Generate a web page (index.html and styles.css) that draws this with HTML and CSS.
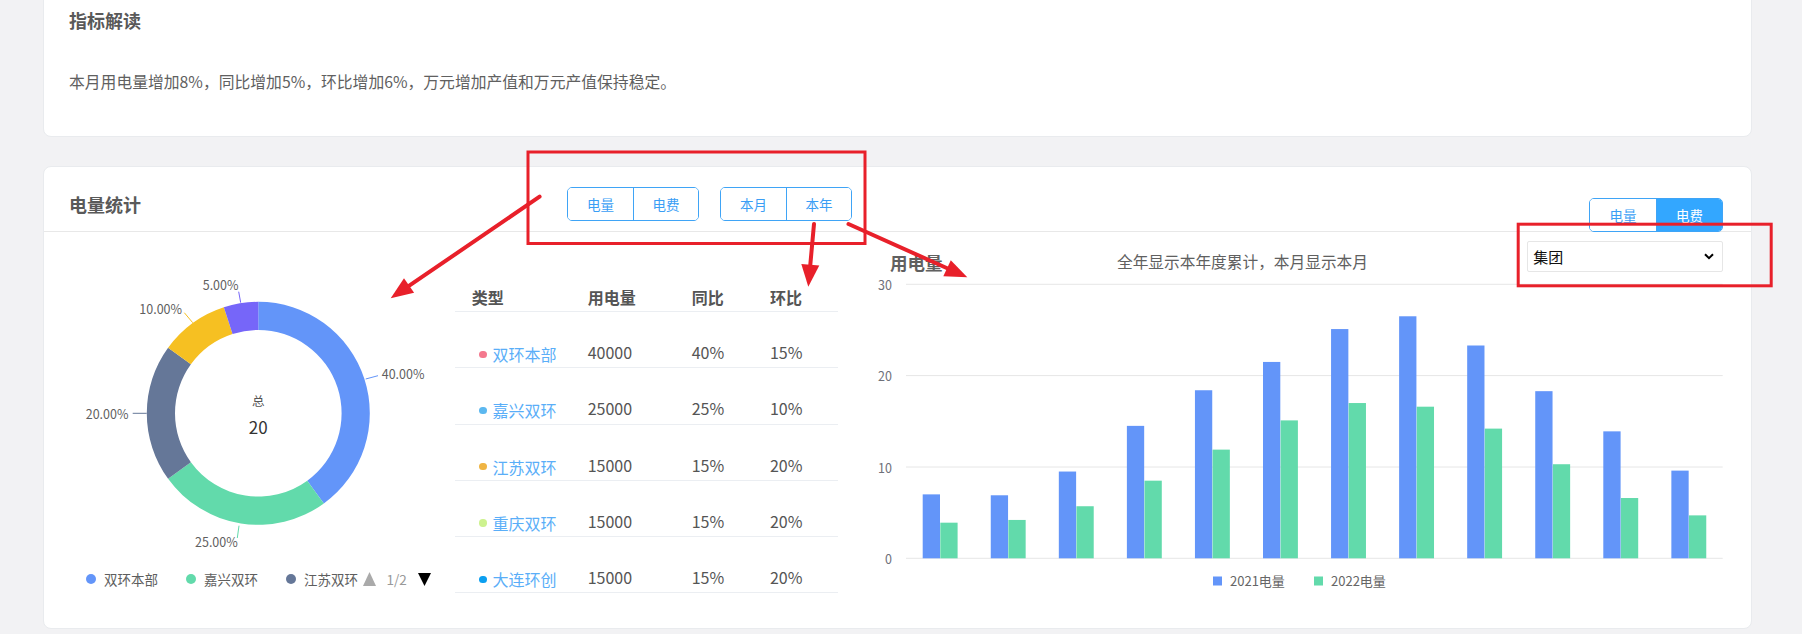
FILE: index.html
```html
<!DOCTYPE html>
<html lang="zh-CN">
<head>
<meta charset="utf-8">
<title>电量统计</title>
<link rel="stylesheet" href="styles.css">
</head>
<body>
<div class="page">
  <section class="card card-intro">
    <h2 class="card-title">指标解读</h2>
    <p class="intro-text">本月用电量增加8%，同比增加5%，环比增加6%，万元增加产值和万元产值保持稳定。</p>
  </section>

  <section class="card card-stats">
    <header class="stats-head">
      <h2 class="card-title head-title">电量统计</h2>
      <div class="seg seg-1"><button class="seg-btn">电量</button><button class="seg-btn">电费</button></div>
      <div class="seg seg-2"><button class="seg-btn">本月</button><button class="seg-btn">本年</button></div>
      <div class="seg seg-right"><button class="seg-btn">电量</button><button class="seg-btn seg-on">电费</button></div>
    </header>

    <div class="stats-body">
      <div class="pie-col">
        <svg class="pie-svg" width="411" height="337" viewBox="0 0 411 337">
          <g transform="translate(214.3,181.3)">
            <path fill="#6395f9" d="M0,-111.5 A111.5,111.5 0 0 1 65.54,90.21 L48.96,67.39 A83.3,83.3 0 0 0 0,-83.3 Z"/>
            <path fill="#62daab" d="M65.54,90.21 A111.5,111.5 0 0 1 -90.21,65.54 L-67.39,48.96 A83.3,83.3 0 0 0 48.96,67.39 Z"/>
            <path fill="#657798" d="M-90.21,65.54 A111.5,111.5 0 0 1 -90.21,-65.54 L-67.39,-48.96 A83.3,83.3 0 0 0 -67.39,48.96 Z"/>
            <path fill="#f6c022" d="M-90.21,-65.54 A111.5,111.5 0 0 1 -34.46,-106.04 L-25.74,-79.22 A83.3,83.3 0 0 0 -67.39,-48.96 Z"/>
            <path fill="#7666f9" d="M-34.46,-106.04 A111.5,111.5 0 0 1 0,-111.5 L0,-83.3 A83.3,83.3 0 0 0 -25.74,-79.22 Z"/>
          </g>
          <g class="pie-leaders" fill="none" stroke-width="1">
            <polyline stroke="#6395f9" points="321.7,147 334,143.7"/>
            <polyline stroke="#62daab" points="195,293.7 193.3,306"/>
            <polyline stroke="#657798" points="102.7,181.3 88.7,181.3"/>
            <polyline stroke="#f6c022" points="148.7,90.7 140.3,80.7"/>
            <polyline stroke="#7666f9" points="196.7,70.7 194.7,59.7"/>
          </g>
          <g class="pie-labels">
            <text x="337.7" y="141.3">40.00%</text>
            <text x="151" y="309.7">25.00%</text>
            <text x="41.7" y="181.3">20.00%</text>
            <text x="95.3" y="76.3">10.00%</text>
            <text x="158.7" y="52.3">5.00%</text>
          </g>
          <text class="pie-center-label" x="214.3" y="168">总</text>
          <text class="pie-center-value" x="214.3" y="194.7">20</text>
        </svg>
        <div class="pie-legend">
          <span class="lg-item"><i class="lg-dot dot-blue"></i>双环本部</span>
          <span class="lg-item"><i class="lg-dot dot-green"></i>嘉兴双环</span>
          <span class="lg-item lg-last"><i class="lg-dot dot-slate"></i>江苏双环</span>
          <svg class="lg-arrow-up" width="13" height="14" viewBox="0 0 13 14"><polygon points="6.5,0 13,14 0,14" fill="#aaaaaa"/></svg>
          <span class="lg-page">1/2</span>
          <svg class="lg-arrow-down" width="13" height="13" viewBox="0 0 13 13"><polygon points="0,0 13,0 6.5,13" fill="#000000"/></svg>
        </div>
      </div>

      <div class="table-col">
        <div class="tbl">
          <div class="tbl-row tbl-head">
            <span class="c1">类型</span><span>用电量</span><span>同比</span><span>环比</span>
          </div>
          <div class="tbl-row">
            <span class="c1 name"><i class="tdot td-pink"></i>双环本部</span><span>40000</span><span>40%</span><span>15%</span>
          </div>
          <div class="tbl-row">
            <span class="c1 name"><i class="tdot td-sky"></i>嘉兴双环</span><span>25000</span><span>25%</span><span>10%</span>
          </div>
          <div class="tbl-row">
            <span class="c1 name"><i class="tdot td-orange"></i>江苏双环</span><span>15000</span><span>15%</span><span>20%</span>
          </div>
          <div class="tbl-row">
            <span class="c1 name"><i class="tdot td-lime"></i>重庆双环</span><span>15000</span><span>15%</span><span>20%</span>
          </div>
          <div class="tbl-row">
            <span class="c1 name"><i class="tdot td-blue"></i>大连环创</span><span>15000</span><span>15%</span><span>20%</span>
          </div>
        </div>
      </div>

      <div class="chart-col">
        <div class="chart-head">
          <span class="chart-title">用电量</span>
          <span class="chart-sub">全年显示本年度累计，本月显示本月</span>
          <div class="select">
            <span class="select-text">集团</span>
            <svg class="select-caret" width="10" height="7" viewBox="0 0 10 7"><polyline points="1,1.2 5,5.2 9,1.2" fill="none" stroke="#000" stroke-width="2"/></svg>
          </div>
        </div>
        <svg class="bar-svg" width="891" height="352" viewBox="0 0 891 352">
          <g stroke="#e6e6e6" stroke-width="1">
            <line x1="46" y1="8.3" x2="862.7" y2="8.3"/>
            <line x1="46" y1="99.6" x2="862.7" y2="99.6"/>
            <line x1="46" y1="191" x2="862.7" y2="191"/>
            <line x1="46" y1="282.3" x2="862.7" y2="282.3"/>
          </g>
          <g class="axis-labels">
            <text x="32" y="8.3">30</text>
            <text x="32" y="99.6">20</text>
            <text x="32" y="191">10</text>
            <text x="32" y="282.3">0</text>
          </g>
          <g fill="#6395f9">
            <rect x="62.7" y="218.37" width="17.3" height="63.93"/>
            <rect x="130.76" y="219.28" width="17.3" height="63.02"/>
            <rect x="198.82" y="195.54" width="17.3" height="86.76"/>
            <rect x="266.88" y="149.87" width="17.3" height="132.43"/>
            <rect x="334.94" y="114.25" width="17.3" height="168.05"/>
            <rect x="403.0" y="85.94" width="17.3" height="196.36"/>
            <rect x="471.06" y="53.06" width="17.3" height="229.24"/>
            <rect x="539.12" y="40.28" width="17.3" height="242.02"/>
            <rect x="607.18" y="69.50" width="17.3" height="212.80"/>
            <rect x="675.24" y="115.17" width="17.3" height="167.13"/>
            <rect x="743.3" y="155.35" width="17.3" height="126.95"/>
            <rect x="811.36" y="194.62" width="17.3" height="87.68"/>
          </g>
          <g fill="#62daab">
            <rect x="80.3" y="246.68" width="17.3" height="35.62"/>
            <rect x="148.36" y="243.94" width="17.3" height="38.36"/>
            <rect x="216.42" y="230.24" width="17.3" height="52.06"/>
            <rect x="284.48" y="204.67" width="17.3" height="77.63"/>
            <rect x="352.54" y="173.62" width="17.3" height="108.68"/>
            <rect x="420.6" y="144.39" width="17.3" height="137.91"/>
            <rect x="488.66" y="127.04" width="17.3" height="155.26"/>
            <rect x="556.72" y="130.69" width="17.3" height="151.61"/>
            <rect x="624.78" y="152.61" width="17.3" height="129.69"/>
            <rect x="692.84" y="188.23" width="17.3" height="94.07"/>
            <rect x="760.9" y="222.02" width="17.3" height="60.28"/>
            <rect x="828.96" y="239.37" width="17.3" height="42.93"/>
          </g>
          <g class="bar-legend">
            <rect x="353" y="300.5" width="9" height="9" fill="#6395f9"/>
            <text x="370" y="304">2021电量</text>
            <rect x="454" y="300.5" width="9" height="9" fill="#62daab"/>
            <text x="471" y="304">2022电量</text>
          </g>
        </svg>
      </div>
    </div>
  </section>
</div>

<svg class="annot" width="1802" height="634" viewBox="0 0 1802 634">
  <g fill="none" stroke="#e8202a" stroke-width="3">
    <rect x="528" y="152" width="337" height="91.5"/>
    <rect x="1518.2" y="224.2" width="253" height="61.6"/>
  </g>
  <g stroke="#e8202a" stroke-width="4" stroke-linecap="round">
    <line x1="539.6" y1="196.7" x2="408.9" y2="285.9"/>
    <line x1="814" y1="224" x2="810.3" y2="264.8"/>
    <line x1="848.5" y1="224" x2="947.2" y2="268.3"/>
  </g>
  <g fill="#e8202a">
    <polygon points="390.7,298.3 414.1,292.7 404,278.3"/>
    <polygon points="808.3,286.7 819.3,265.6 801.3,264"/>
    <polygon points="967.3,277.3 943.3,276.3 950.8,260.3"/>
  </g>
</svg>
</body>
</html>
```

FILE: styles.css
```css
* {
  box-sizing: border-box;
}

html, body {
  margin: 0;
  padding: 0;
}

body {
  width: 1802px;
  height: 634px;
  overflow: hidden;
  background: #f2f2f4;
  font-family: "Noto Sans CJK SC", "Noto Sans", sans-serif;
  color: #606060;
}

.page {
  padding: 0 50px 0 43px;
}

.card {
  background: #ffffff;
  border: 1px solid #e9ebee;
  border-radius: 8px;
}

.card-title {
  margin: 0;
  font-size: 18px;
  line-height: 24px;
  font-weight: 700;
  color: #595959;
}

/* ---------- intro card ---------- */
.card-intro {
  margin-top: -12px;
  height: 149px;
  padding: 18.5px 0 0 25px;
}

.intro-text {
  margin: 39.5px 0 0;
  font-size: 15.8px;
  line-height: 22px;
  color: #606060;
}

/* ---------- stats card ---------- */
.card-stats {
  margin-top: 29px;
  height: 463px;
}

.stats-head {
  display: flex;
  align-items: flex-start;
  height: 65px;
  padding: 0 28px 0 25px;
  border-bottom: 1px solid #e8e8e8;
}

.head-title {
  width: 498px;
  flex: none;
  margin-top: 25px;
}

.seg {
  display: flex;
  flex: none;
  height: 34px;
  border: 1px solid #3fa4f6;
  border-radius: 5px;
  overflow: hidden;
  background: #ffffff;
}

.seg-1 {
  margin-top: 20px;
}

.seg-2 {
  margin-top: 20px;
  margin-left: 21px;
}

.seg-right {
  margin-top: 31px;
  margin-left: auto;
  position: relative;
}

.seg-btn {
  width: 65px;
  height: 100%;
  padding: 0;
  border: 0;
  background: #ffffff;
  font-family: "Noto Sans CJK SC", sans-serif;
  font-size: 13.5px;
  color: #3a9ef5;
}

.seg-btn + .seg-btn {
  border-left: 1px solid #3fa4f6;
}

.seg-right .seg-btn {
  width: 66px;
}

.seg-btn.seg-on {
  background: #33a7ff;
  color: #ffffff;
}

.stats-body {
  display: flex;
  height: 396px;
}

/* ---------- pie ---------- */
.pie-col {
  width: 411px;
  flex: none;
}

.pie-svg {
  display: block;
}

.pie-labels text {
  font-size: 12.5px;
  fill: #5f5f5f;
  dominant-baseline: central;
}

.pie-center-label {
  font-size: 12.5px;
  fill: #555555;
  text-anchor: middle;
  dominant-baseline: central;
}

.pie-center-value {
  font-size: 17px;
  fill: #333333;
  text-anchor: middle;
  dominant-baseline: central;
}

.pie-legend {
  display: flex;
  align-items: center;
  height: 20px;
  padding-left: 42px;
  font-size: 13.5px;
  color: #5e5e5e;
  white-space: nowrap;
}

.lg-item {
  display: flex;
  align-items: center;
  margin-right: 28px;
}

.lg-item.lg-last {
  margin-right: 5px;
}

.lg-dot {
  width: 10px;
  height: 10px;
  border-radius: 50%;
  margin-right: 8px;
}

.dot-blue { background: #6395f9; }
.dot-green { background: #62daab; }
.dot-slate { background: #657798; }

.lg-arrow-up,
.lg-arrow-down {
  display: block;
  flex: none;
}

.lg-page {
  margin: 0 11px 0 10.5px;
  color: #999999;
}

/* ---------- table ---------- */
.table-col {
  width: 405px;
  flex: none;
  padding-top: 54px;
}

.tbl {
  width: 383.3px;
}

.tbl-row {
  display: grid;
  grid-template-columns: 132.7px 104px 78.3px 1fr;
  height: 56.3px;
  padding-top: 29px;
  border-bottom: 1px solid #ebeef2;
  font-size: 16px;
  line-height: 22px;
  color: #555555;
  white-space: nowrap;
}

.tbl-row.tbl-head {
  height: auto;
  padding: 0 0 3px;
  font-weight: 700;
  color: #555555;
}

.tbl-head .c1 {
  padding-left: 16.7px;
}

.c1.name {
  display: flex;
  align-items: center;
  padding-left: 24.3px;
  color: #5aaef8;
}

.tdot {
  width: 7.3px;
  height: 7.3px;
  border-radius: 50%;
  margin-right: 6px;
  flex: none;
}

.td-pink { background: #f4788e; }
.td-sky { background: #5cb8f0; }
.td-orange { background: #efb443; }
.td-lime { background: #cdf28f; }
.td-blue { background: #0b9ff0; }

/* ---------- bar chart ---------- */
.chart-col {
  flex: 1;
  min-width: 0;
}

.chart-head {
  display: grid;
  grid-template-columns: 227px 1fr 195.4px;
  align-items: start;
  height: 44px;
  padding: 0 28.3px 0 30px;
}

.chart-title {
  margin-top: 20px;
  font-size: 17.5px;
  line-height: 22px;
  font-weight: 700;
  color: #606060;
}

.chart-sub {
  margin-top: 19px;
  font-size: 15.7px;
  line-height: 22px;
  color: #606060;
  white-space: nowrap;
}

.select {
  display: flex;
  align-items: center;
  justify-content: space-between;
  margin-top: 9.3px;
  height: 31px;
  padding: 0 8px 0 5px;
  border: 1px solid #e6e6e6;
  border-radius: 2px;
  background: #ffffff;
}

.select-text {
  font-size: 15px;
  font-weight: 400;
  color: #111111;
}

.select-caret {
  display: block;
}

.bar-svg {
  display: block;
}

.axis-labels text {
  font-size: 12.5px;
  fill: #6e7079;
  text-anchor: end;
  dominant-baseline: central;
}

.bar-legend text {
  font-size: 13px;
  fill: #666666;
  dominant-baseline: central;
}

/* ---------- annotation overlay ---------- */
.annot {
  position: absolute;
  top: 0;
  left: 0;
  pointer-events: none;
}
```
